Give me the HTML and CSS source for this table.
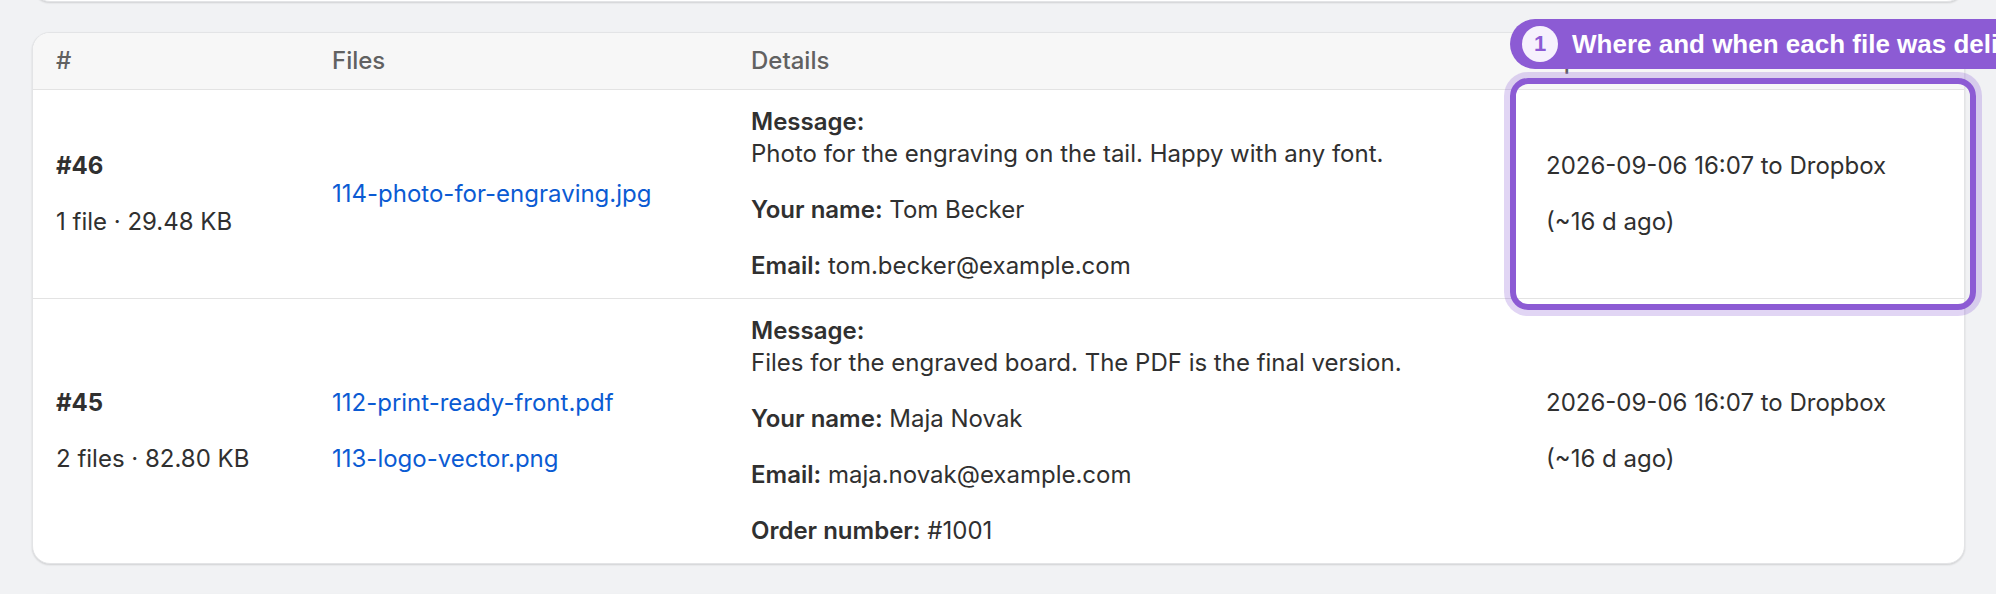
FILE: index.html
```html
<!DOCTYPE html>
<html lang="en">
<head>
<meta charset="utf-8">
<title>Uploads</title>
<link rel="stylesheet" href="styles.css">
</head>
<body>
<div class="page">
  <div class="card ghost ghost-top"></div>

  <div class="card table">
    <div class="row head">
      <div class="cell">#</div>
      <div class="cell">Files</div>
      <div class="cell">Details</div>
      <div class="cell">Uploaded</div>
    </div>

    <div class="row">
      <div class="cell stack">
        <div class="strong">#46</div>
        <div>1 file · 29.48 KB</div>
      </div>
      <div class="cell stack">
        <a class="file-link" href="#">114-photo-for-engraving.jpg</a>
      </div>
      <div class="cell stack details">
        <div class="field"><span class="label">Message:</span><br>Photo for the engraving on the tail. Happy with any font.</div>
        <div class="field"><span class="label">Your name:</span> Tom Becker</div>
        <div class="field"><span class="label">Email:</span> tom.becker@example.com</div>
      </div>
      <div class="cell stack when highlighted">
        <div>2026-09-06 16:07 to Dropbox</div>
        <div>(~16 d ago)</div>
        <div class="hl-ring"></div>
        <div class="hl-tip"><span class="hl-num">1</span><span class="hl-text">Where and when each file was delivered</span></div>
      </div>
    </div>

    <div class="row last">
      <div class="cell stack">
        <div class="strong">#45</div>
        <div>2 files · 82.80 KB</div>
      </div>
      <div class="cell stack">
        <a class="file-link" href="#">112-print-ready-front.pdf</a>
        <a class="file-link" href="#">113-logo-vector.png</a>
      </div>
      <div class="cell stack details">
        <div class="field"><span class="label">Message:</span><br>Files for the engraved board. The PDF is the final version.</div>
        <div class="field"><span class="label">Your name:</span> Maja Novak</div>
        <div class="field"><span class="label">Email:</span> maja.novak@example.com</div>
        <div class="field"><span class="label">Order number:</span> #1001</div>
      </div>
      <div class="cell stack when">
        <div>2026-09-06 16:07 to Dropbox</div>
        <div>(~16 d ago)</div>
      </div>
    </div>
  </div>

  <div class="card ghost ghost-bottom"></div>
</div>
</body>
</html>
```

FILE: styles.css
```css
html, body {
  margin: 0;
  padding: 0;
  overflow: hidden;
  background: #f1f2f4;
}

body {
  font-family: Inter, "Noto Sans", sans-serif;
  color: #303030;
  font-size: 24px;
  line-height: 32px;
}

.page {
  display: flex;
  flex-direction: column;
  gap: 30px;
  padding: 0 31px 0 32px;
}

.card {
  background: #ffffff;
  border: 1px solid #e3e4e6;
  border-radius: 18px;
  box-shadow: 0 1px 2px rgba(0, 0, 0, 0.14);
}

.ghost {
  height: 120px;
}

.ghost-top {
  margin-top: -120px;
}

.table {
  display: flex;
  flex-direction: column;
}

.row {
  display: grid;
  grid-template-columns: 276px 419px 795px 1fr;
  border-bottom: 1px solid #e3e3e3;
}

.row.last {
  border-bottom: none;
}

.row.head {
  background: #f7f7f7;
  border-radius: 17px 17px 0 0;
  color: #616161;
  font-size: 24px;
  font-weight: 500;
}

.row.head .cell {
  padding: 12px 23px;
}

.cell {
  padding: 16px 23px;
}

.stack {
  display: flex;
  flex-direction: column;
  justify-content: center;
  gap: 24px;
}

.strong {
  font-weight: 700;
}

.label {
  font-weight: 600;
}

.file-link {
  color: #0b5bd3;
  text-decoration: none;
}

.highlighted {
  position: relative;
}

.hl-ring {
  position: absolute;
  top: -12px;
  left: -13px;
  right: -12px;
  bottom: -12px;
  border: 6px solid #8c5bd4;
  border-radius: 18px;
  box-shadow: 0 0 0 6px rgba(140, 91, 212, 0.26);
  pointer-events: none;
}

.hl-tip {
  position: absolute;
  left: -13px;
  top: -71px;
  height: 50px;
  display: flex;
  align-items: center;
  gap: 14px;
  padding: 0 40px 0 12px;
  background: #8c5bd4;
  border-radius: 25px;
  white-space: nowrap;
  color: #ffffff;
  font-family: "Liberation Sans", Arial, sans-serif;
  font-weight: 700;
  font-size: 26px;
  line-height: 30px;
}

.hl-num {
  width: 36px;
  height: 36px;
  border-radius: 50%;
  background: #f6f1fd;
  color: #8c5bd4;
  display: flex;
  align-items: center;
  justify-content: center;
  font-size: 22px;
}
```
